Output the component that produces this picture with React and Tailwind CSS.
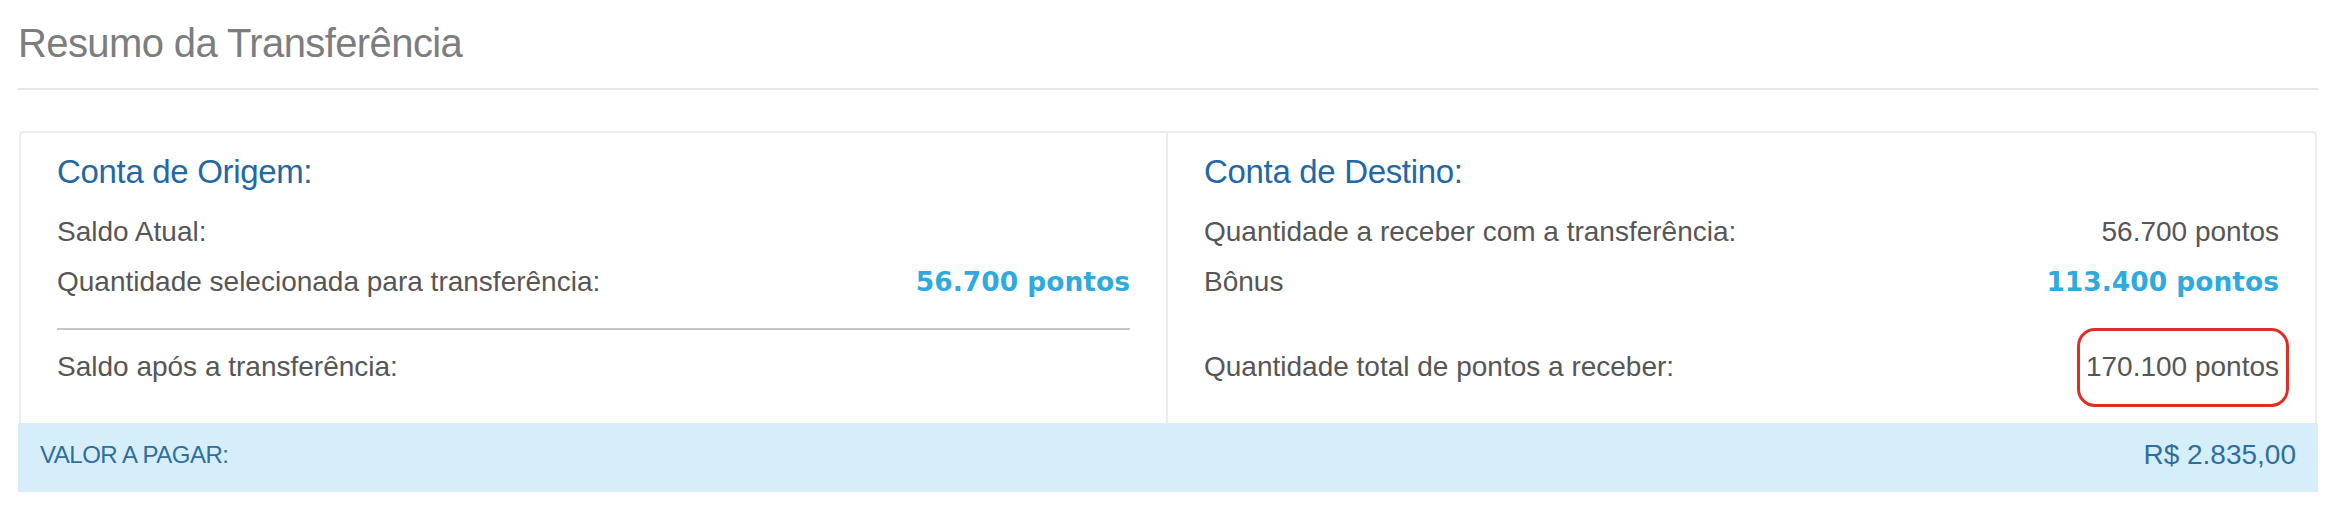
import React from 'react';

const font = { fontFamily: '"Liberation Sans", Arial, sans-serif' };

function Row({ label, value, bold, circled }) {
  return (
    <div className="flex items-start justify-between h-[50px] leading-[50px] text-[28px] text-[#565656]">
      <span>{label}</span>
      {value && (
        <div
          className={
            bold
              ? 'relative text-[26.5px] font-bold text-[#2eaade] font-["DejaVu_Sans",sans-serif]'
              : 'relative'
          }
        >
          {value}
          {circled && (
            <span className="absolute -left-[9px] -right-[10px] -top-[14px] -bottom-[15px] rounded-[18px] border-[3px] border-[#dd2f28]" />
          )}
        </div>
      )}
    </div>
  );
}

export default function App() {
  return (
    <div className="bg-white w-[2340px] h-[514px] pl-[18px] pr-[22px]" style={font}>
      <h3 className="pt-[19px] text-[40px] leading-[48px] tracking-[-0.015em] text-[#7d7d7d]">
        Resumo da Transferência
      </h3>
      <div className="mt-[21px] border-t-2 border-[#e6e6e6]" />

      <div className="mt-[41px] mx-[1px]">
        <div className="grid grid-cols-2 border-2 border-b-0 border-[#ececec] rounded-t-[5px]">
          {/* Origem */}
          <div className="border-r-2 border-[#ececec] pl-[36px] pr-[36px] pt-[19px] pb-[31px]">
            <h4 className="text-[33px] leading-[40px] tracking-[-0.01em] text-[#2268a5] mb-[15px]">
              Conta de Origem:
            </h4>
            <Row label="Saldo Atual:" />
            <Row label="Quantidade selecionada para transferência:" value="56.700 pontos" bold />
            <div className="mt-[21px] border-t-2 border-[#c8c8c8]" />
            <div className="mt-[12px]">
              <Row label="Saldo após a transferência:" />
            </div>
          </div>

          {/* Destino */}
          <div className="pl-[36px] pr-[36px] pt-[19px] pb-[31px]">
            <h4 className="text-[33px] leading-[40px] tracking-[-0.01em] text-[#2268a5] mb-[15px]">
              Conta de Destino:
            </h4>
            <Row label="Quantidade a receber com a transferência:" value="56.700 pontos" />
            <Row label="Bônus" value="113.400 pontos" bold />
            <div className="mt-[35px]">
              <Row label="Quantidade total de pontos a receber:" value="170.100 pontos" circled />
            </div>
          </div>
        </div>

        <div className="flex items-center justify-between h-[69px] pb-[5px] -mx-[1px] px-[22px] bg-[#d5eefa] text-[#2f6e9e]">
          <span className="text-[24px] tracking-[-0.02em]">VALOR A PAGAR:</span>
          <span className="text-[28px]">R$ 2.835,00</span>
        </div>
      </div>
    </div>
  );
}
